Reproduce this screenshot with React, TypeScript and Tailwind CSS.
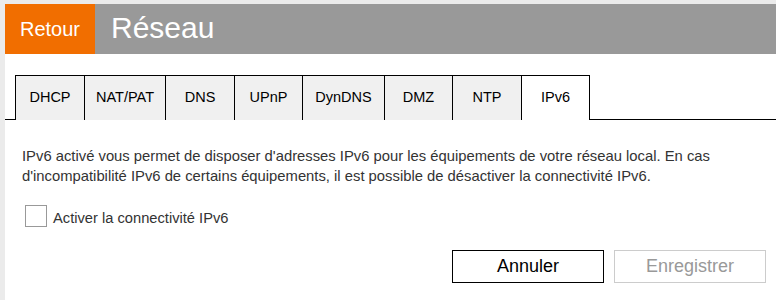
import React from 'react';

const tabs = [
  { label: 'DHCP', w: 'w-[69px]' },
  { label: 'NAT/PAT', w: 'w-[81px]' },
  { label: 'DNS', w: 'w-[69px]' },
  { label: 'UPnP', w: 'w-[68px]' },
  { label: 'DynDNS', w: 'w-[82px]' },
  { label: 'DMZ', w: 'w-[68px]' },
  { label: 'NTP', w: 'w-[69px]' },
  { label: 'IPv6', w: 'w-[69px]', active: true },
];

export default function App() {
  return (
    <div className="h-[300px] w-full overflow-hidden bg-[#ebebeb] pt-[4px] pl-[5px] font-['Liberation_Sans',Arial,sans-serif]">
      <div className="h-full bg-white">
        <div className="flex h-[50px] bg-[#999999]">
          <button className="w-[90px] bg-[#f16e00] text-[20px] text-white">Retour</button>
          <h1 className="flex items-center pb-[3px] pl-[16px] text-[30px] text-white">Réseau</h1>
        </div>

        <div className="mt-[21px] flex h-[45px]">
          <div className="w-[10px] border-b border-black" />
          {tabs.map((t, i) => (
            <div
              key={t.label}
              className={`${t.w} flex items-center justify-center border-t border-l border-black text-[14.5px] text-black ${
                t.active ? 'bg-white' : 'bg-[#f0f0f0]'
              } ${i === tabs.length - 1 ? 'border-r' : ''}`}
            >
              {t.label}
            </div>
          ))}
          <div className="flex-1 border-b border-black" />
        </div>

        <div className="pr-[10px] pl-[17px]">
          <p className="mt-[26px] text-[14.8px] leading-[20px] text-[#333333]">
            IPv6 activé vous permet de disposer d'adresses IPv6 pour les équipements de votre réseau local. En cas
            d'incompatibilité IPv6 de certains équipements, il est possible de désactiver la connectivité IPv6.
          </p>

          <label className="mt-[16px] flex items-center gap-[6px] pl-[3px] text-[14.7px] text-[#333333]">
            <span className="h-[22px] w-[22px] border border-[#999999] bg-white" />
            <span className="pt-[5px]">Activer la connectivité IPv6</span>
          </label>

          <div className="mt-[21px] flex justify-end gap-[10px]">
            <button className="h-[33px] w-[152px] border border-black bg-white text-[18px] text-black">Annuler</button>
            <button className="h-[33px] w-[152px] border border-[#cccccc] bg-white text-[18px] text-[#999999]">
              Enregistrer
            </button>
          </div>
        </div>
      </div>
    </div>
  );
}
